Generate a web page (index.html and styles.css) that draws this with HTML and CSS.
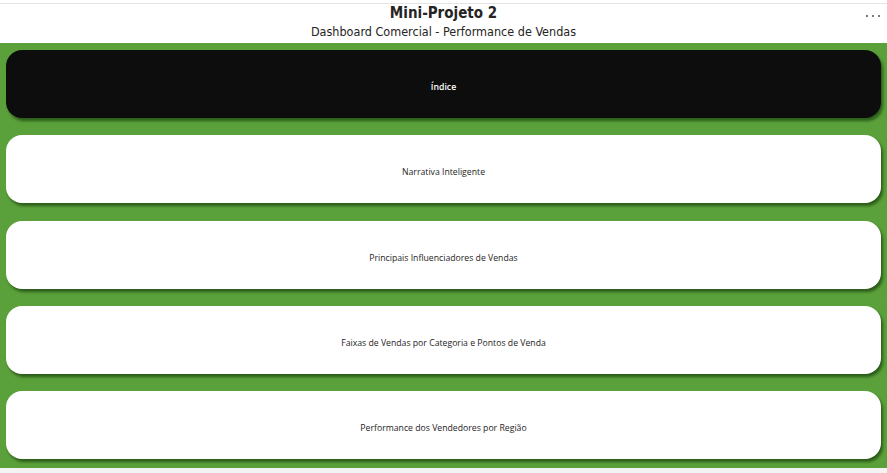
FILE: index.html
```html
<!DOCTYPE html>
<html lang="pt-BR">
<head>
<meta charset="utf-8">
<title>Mini-Projeto 2</title>
<link rel="stylesheet" href="styles.css">
</head>
<body>
<header class="header">
  <h1 class="title">Mini-Projeto 2</h1>
  <p class="subtitle">Dashboard Comercial - Performance de Vendas</p>
  <span class="more" aria-label="Mais opções">
    <svg width="14" height="4" viewBox="0 0 14 4"><rect x="0" y="1" width="2" height="2" fill="#7a7a7a"/><rect x="6" y="1" width="2" height="2" fill="#7a7a7a"/><rect x="12" y="1" width="2" height="2" fill="#7a7a7a"/></svg>
  </span>
</header>
<main class="board">
  <div class="card card-dark">Índice</div>
  <div class="card">Narrativa Inteligente</div>
  <div class="card">Principais Influenciadores de Vendas</div>
  <div class="card">Faixas de Vendas por Categoria e Pontos de Venda</div>
  <div class="card">Performance dos Vendedores por Região</div>
</main>
<div class="footer"></div>
</body>
</html>
```
FILE: styles.css
```css
html, body {
  margin: 0;
  padding: 0;
  background: #ffffff;
  width: 887px;
  height: 473px;
  overflow: hidden;
}
.header {
  position: relative;
  box-sizing: border-box;
  margin-top: 3px;
  border-top: 1px solid #e4e4e4;
  height: 40px;
  padding-top: 1px;
  background: #ffffff;
  display: flex;
  flex-direction: column;
  align-items: center;
}
.title {
  margin: 0;
  font-family: "DejaVu Sans", sans-serif;
  font-stretch: condensed;
  font-weight: bold;
  font-size: 15px;
  line-height: 17px;
  color: #252423;
}
.subtitle {
  margin: 2px 0 0 0;
  font-family: "DejaVu Sans", sans-serif;
  font-stretch: condensed;
  font-size: 12.5px;
  line-height: 16px;
  color: #252423;
}
.more {
  position: absolute;
  right: 7px;
  top: 10px;
  display: flex;
}
.board {
  height: 425px;
  box-sizing: border-box;
  background: #5ba13b;
  padding: 7px 6px 0 6px;
  display: flex;
  flex-direction: column;
  gap: 17.25px;
}
.card {
  height: 68px;
  box-sizing: border-box;
  padding-top: 6px;
  flex: none;
  border-radius: 16px;
  background: #ffffff;
  box-shadow: 2px 3px 3px rgba(30, 70, 15, 0.75);
  display: flex;
  align-items: center;
  justify-content: center;
  font-family: "Open Sans", sans-serif;
  font-size: 8.7px;
  color: #252423;
}
.card-dark {
  background: #0d0d0d;
  color: #ffffff;
  font-weight: 600;
}
.footer {
  height: 5px;
  background: #f3f3f3;
}
```
